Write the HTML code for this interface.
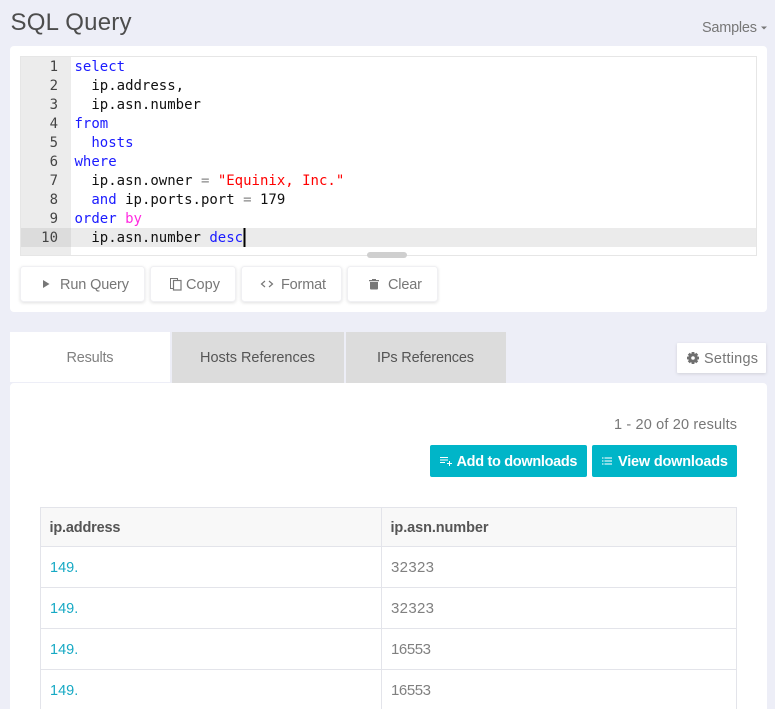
<!DOCTYPE html>
<html><head><meta charset="utf-8"><title>SQL Query</title>
<style>
html,body{margin:0;padding:0;background:#edeef7;width:775px;height:709px;overflow:hidden}
svg{display:block;position:absolute;left:0;top:0}
text{font-family:"Liberation Sans",sans-serif;font-size:14.5px;fill:#777;white-space:pre}
.m{font-family:"DejaVu Sans Mono","Liberation Mono",monospace;font-size:14px;fill:#111}
.k{fill:#1a1aff}.p{fill:#ff2be0}.s{fill:#f00}.o{fill:#888}
.n{fill:#444;text-anchor:end}
.b{filter:drop-shadow(0 1px 1.5px rgba(0,0,0,.12))}
.w{fill:#fff;font-weight:bold;font-size:14.5px}
.h{fill:#555;font-weight:bold}
.l{fill:#16a9c4}
.d{font-size:15px;fill:#808080}
</style></head><body>
<svg width="775" height="709" viewBox="0 0 775 709" xmlns="http://www.w3.org/2000/svg">
<rect width="775" height="709" fill="#edeef7"/>
<text x="10.5" y="30" style="font-size:24px;fill:#4d4d4d" textLength="121">SQL Query</text>
<text x="702" y="32" style="fill:#777" textLength="55">Samples</text>
<path d="M761 26.5h6l-3 3z" fill="#777"/>

<!-- query panel -->
<rect x="10" y="46" width="757" height="266" rx="4" fill="#fff"/>
<rect x="20.5" y="56.5" width="736" height="199" fill="#fff" stroke="#e6e6e6"/>
<rect x="21" y="57" width="50" height="198" fill="#ececec"/>
<rect x="71" y="228" width="685" height="19" fill="#ebebeb"/>
<rect x="21" y="228" width="50" height="19" fill="#dcdcdc"/>
<rect x="367" y="252" width="40" height="6" rx="3" fill="#cfcfcf"/>
<g class="m">
<text class="m n" x="58" y="71">1</text>
<text class="m n" x="58" y="90">2</text>
<text class="m n" x="58" y="109">3</text>
<text class="m n" x="58" y="128">4</text>
<text class="m n" x="58" y="147">5</text>
<text class="m n" x="58" y="166">6</text>
<text class="m n" x="58" y="185">7</text>
<text class="m n" x="58" y="204">8</text>
<text class="m n" x="58" y="223">9</text>
<text class="m n" x="58" y="242">10</text>
<text class="m k" x="74.5" y="71">select</text>
<text class="m" x="74.5" y="90">  ip.address,</text>
<text class="m" x="74.5" y="109">  ip.asn.number</text>
<text class="m k" x="74.5" y="128">from</text>
<text class="m k" x="74.5" y="147">  hosts</text>
<text class="m k" x="74.5" y="166">where</text>
<text class="m" x="74.5" y="185">  ip.asn.owner <tspan class="o">=</tspan> <tspan class="s">"Equinix, Inc."</tspan></text>
<text class="m" x="74.5" y="204">  <tspan class="k">and</tspan> ip.ports.port <tspan class="o">=</tspan> 179</text>
<text class="m" x="74.5" y="223"><tspan class="k">order</tspan> <tspan class="p">by</tspan></text>
<text class="m" x="74.5" y="242">  ip.asn.number <tspan class="k">desc</tspan></text>
</g>
<rect x="243.5" y="228" width="2" height="19" fill="#000"/>

<!-- buttons -->
<g class="b" fill="#fff" stroke="#f0f0f3" stroke-width="1">
<rect x="20.5" y="266.500" width="124" height="35" rx="3"/>
<rect x="150.5" y="266.500" width="85" height="35" rx="3"/>
<rect x="241.5" y="266.500" width="100" height="35" rx="3"/>
<rect x="347.5" y="266.500" width="90" height="35" rx="3"/>
</g>
<path d="M43 280v8l6.500-4z" fill="#777"/>
<text x="60" y="289" textLength="69">Run Query</text>
<path d="M173 288.500h-2.500v-10h7v1.500" fill="none" stroke="#777" stroke-width="1"/>
<rect x="173.500" y="280.500" width="7.500" height="9.500" fill="none" stroke="#777" stroke-width="1.200"/>
<text x="186" y="289" textLength="34">Copy</text>
<path d="M265 281l-3.500 3 3.500 3M269 281l3.500 3-3.500 3" fill="none" stroke="#777" stroke-width="1.200"/>
<text x="281" y="289" textLength="45">Format</text>
<path d="M369 280h10v1.300h-10zM372 279h4v1h-4zM370 282h8v6.500a1 1 0 0 1-1 1h-6a1 1 0 0 1-1-1z" fill="#777"/>
<text x="388" y="289" textLength="34">Clear</text>

<!-- tabs -->
<rect x="10" y="332" width="160" height="50" fill="#fff"/>
<rect x="172" y="332" width="172" height="51" fill="#dcdcdc"/>
<rect x="346" y="332" width="160" height="51" fill="#dcdcdc"/>
<text x="66.500" y="362" textLength="47" style="fill:#808080">Results</text>
<text x="200" y="362" textLength="115" style="fill:#555">Hosts References</text>
<text x="377" y="362" textLength="97" style="fill:#555">IPs References</text>
<rect class="b" x="677" y="343" width="89" height="30" rx="1" fill="#fff"/>
<g transform="translate(693,358)" fill="#6f6f6f">
<circle r="3.300" fill="none" stroke="#6f6f6f" stroke-width="3"/>
<path d="M-1.400-6h2.800v2.500h-2.800zM-1.400 3.500h2.800v2.500h-2.800zM-6-1.400h2.500v2.800h-2.500zM3.500-1.400h2.500v2.800h-2.500z"/>
<path transform="rotate(45)" d="M-1.400-6h2.800v2.500h-2.800zM-1.400 3.500h2.800v2.500h-2.800zM-6-1.400h2.500v2.800h-2.500zM3.500-1.400h2.500v2.800h-2.500z"/>
</g>
<text x="704" y="363" textLength="54">Settings</text>

<!-- results panel -->
<rect x="10" y="383" width="757" height="340" rx="4" fill="#fff"/>
<text x="614" y="429" textLength="123">1 - 20 of 20 results</text>
<rect x="430" y="445" width="157" height="32" rx="2" fill="#00b5c8"/>
<rect x="592" y="445" width="145" height="32" rx="2" fill="#00b5c8"/>
<path d="M440 457.500h8M440 460h8M440 462.500h5M447 463.500h5M449.500 461v5" fill="none" stroke="#fff" stroke-width="1"/>
<text class="w" x="456.500" y="466" textLength="121">Add to downloads</text>
<path d="M602 458h1.500M602 461h1.500M602 464h1.500M604.500 458h7.500M604.500 461h7.500M604.500 464h7.500" fill="none" stroke="#fff" stroke-width="1.200" opacity=".85"/>
<text class="w" x="618" y="466" textLength="110">View downloads</text>

<!-- table -->
<rect x="40.500" y="507.500" width="696" height="39" fill="#f8f8f8"/>
<g fill="none" stroke="#e3e4ea" stroke-width="1">
<path d="M40.500 720V507.500H736.500V720M381.500 507.500V720M40.500 546.500H736.500M40.500 587.500H736.500M40.500 628.500H736.500M40.500 669.500H736.500"/>
</g>
<text class="h" x="49.500" y="532" textLength="71">ip.address</text>
<text class="h" x="390.500" y="532" textLength="98">ip.asn.number</text>
<text class="l" x="50" y="572">149.99</text>
<text class="l" x="50" y="613">149.99</text>
<text class="l" x="50" y="654">149.99</text>
<text class="l" x="50" y="695">149.99</text>
<rect x="79" y="555" width="16" height="30" fill="#fff"/>
<rect x="79" y="596" width="16" height="30" fill="#fff"/>
<rect x="79" y="637" width="16" height="30" fill="#fff"/>
<rect x="79" y="678" width="16" height="30" fill="#fff"/>
<text class="d" x="391" y="572" textLength="43">32323</text>
<text class="d" x="391" y="613" textLength="43">32323</text>
<text class="d" x="391" y="654" textLength="40">16553</text>
<text class="d" x="391" y="695" textLength="40">16553</text>
</svg>
</body></html>
